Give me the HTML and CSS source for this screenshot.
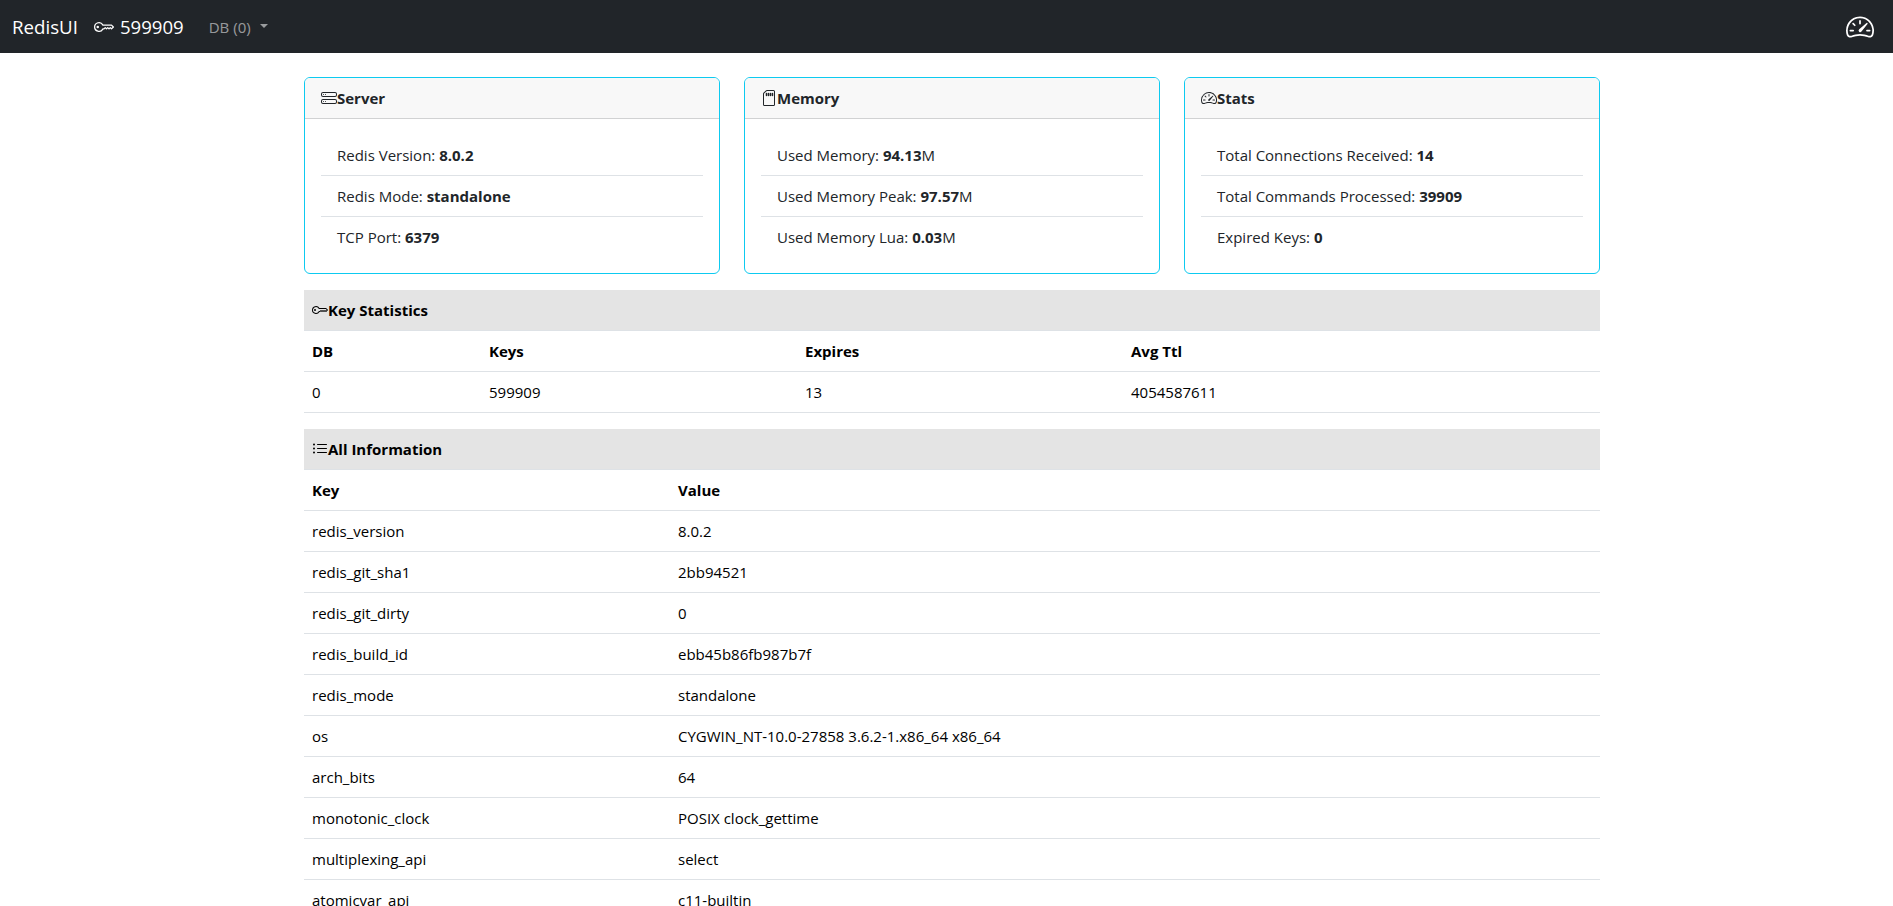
FILE: index.html
```html
<!DOCTYPE html>
<html lang="en">
<head>
<meta charset="utf-8">
<title>RedisUI</title>
<link rel="stylesheet" href="styles.css">
</head>
<body>
<svg class="sprite" xmlns="http://www.w3.org/2000/svg">
  <symbol id="i-key" viewBox="0 0 16 16"><path d="M0 8a4 4 0 0 1 7.465-2H14a.5.5 0 0 1 .354.146l1.5 1.5a.5.5 0 0 1 0 .708l-1.5 1.5a.5.5 0 0 1-.708 0L13 9.207l-.646.647a.5.5 0 0 1-.708 0L11 9.207l-.646.647a.5.5 0 0 1-.708 0L9 9.207l-.646.647A.5.5 0 0 1 8 10h-.535A4 4 0 0 1 0 8m4-3a3 3 0 1 0 2.712 4.285A.5.5 0 0 1 7.163 9h.63l.853-.854a.5.5 0 0 1 .708 0l.646.647.646-.647a.5.5 0 0 1 .708 0l.646.647.646-.647a.5.5 0 0 1 .708 0l.646.647.793-.793-1-1h-6.63a.5.5 0 0 1-.451-.285A3 3 0 0 0 4 5"/><path d="M4 8a1 1 0 1 1-2 0 1 1 0 0 1 2 0"/></symbol>
  <symbol id="i-hdd" viewBox="0 0 16 16"><path d="M14 10a1 1 0 0 1 1 1v1a1 1 0 0 1-1 1H2a1 1 0 0 1-1-1v-1a1 1 0 0 1 1-1zM2 9a2 2 0 0 0-2 2v1a2 2 0 0 0 2 2h12a2 2 0 0 0 2-2v-1a2 2 0 0 0-2-2z"/><path d="M5 11.5a.5.5 0 1 1-1 0 .5.5 0 0 1 1 0m-2 0a.5.5 0 1 1-1 0 .5.5 0 0 1 1 0M14 3a1 1 0 0 1 1 1v1a1 1 0 0 1-1 1H2a1 1 0 0 1-1-1V4a1 1 0 0 1 1-1zM2 2a2 2 0 0 0-2 2v1a2 2 0 0 0 2 2h12a2 2 0 0 0 2-2V4a2 2 0 0 0-2-2z"/><path d="M5 4.5a.5.5 0 1 1-1 0 .5.5 0 0 1 1 0m-2 0a.5.5 0 1 1-1 0 .5.5 0 0 1 1 0"/></symbol>
  <symbol id="i-sd" viewBox="0 0 16 16"><path d="M6.25 3.5a.75.75 0 0 0-1.5 0v2a.75.75 0 0 0 1.5 0zm2 0a.75.75 0 0 0-1.5 0v2a.75.75 0 0 0 1.5 0zm2 0a.75.75 0 0 0-1.5 0v2a.75.75 0 0 0 1.5 0zm2 0a.75.75 0 0 0-1.5 0v2a.75.75 0 0 0 1.5 0z"/><path fill-rule="evenodd" d="M5.914 0H12.5A1.5 1.5 0 0 1 14 1.5v13a1.5 1.5 0 0 1-1.5 1.5h-9A1.5 1.5 0 0 1 2 14.5V3.914c0-.398.158-.78.44-1.06L4.853.439A1.5 1.5 0 0 1 5.914 0M13 1.5a.5.5 0 0 0-.5-.5H5.914a.5.5 0 0 0-.353.146L3.146 3.561A.5.5 0 0 0 3 3.914V14.5a.5.5 0 0 0 .5.5h9a.5.5 0 0 0 .5-.5z"/></symbol>
  <symbol id="i-speed" viewBox="0 0 16 16"><path d="M8 4a.5.5 0 0 1 .5.5V6a.5.5 0 0 1-1 0V4.5A.5.5 0 0 1 8 4M3.732 5.732a.5.5 0 0 1 .707 0l.915.914a.5.5 0 1 1-.708.708l-.914-.915a.5.5 0 0 1 0-.707M2 10a.5.5 0 0 1 .5-.5h1.586a.5.5 0 0 1 0 1H2.5A.5.5 0 0 1 2 10m9.5 0a.5.5 0 0 1 .5-.5h1.5a.5.5 0 0 1 0 1H12a.5.5 0 0 1-.5-.5m.754-4.246a.39.39 0 0 0-.527-.02L7.547 9.31a.91.91 0 1 0 1.302 1.258l3.434-4.297a.39.39 0 0 0-.029-.518z"/><path fill-rule="evenodd" d="M0 10a8 8 0 1 1 15.547 2.661c-.442 1.253-1.845 1.602-2.932 1.25C11.309 13.488 9.475 13 8 13c-1.474 0-3.31.488-4.615.911-1.087.352-2.49.003-2.932-1.25A8 8 0 0 1 0 10m8-7a7 7 0 0 0-6.603 9.329c.203.575.923.876 1.68.63C4.397 12.533 6.358 12 8 12s3.604.532 4.923.96c.757.245 1.477-.056 1.68-.631A7 7 0 0 0 8 3"/></symbol>
  <symbol id="i-list" viewBox="0 0 16 16"><path fill-rule="evenodd" d="M5 11.5a.5.5 0 0 1 .5-.5h9a.5.5 0 0 1 0 1h-9a.5.5 0 0 1-.5-.5m0-4a.5.5 0 0 1 .5-.5h9a.5.5 0 0 1 0 1h-9a.5.5 0 0 1-.5-.5m0-4a.5.5 0 0 1 .5-.5h9a.5.5 0 0 1 0 1h-9a.5.5 0 0 1-.5-.5m-3 1a1 1 0 1 0 0-2 1 1 0 0 0 0 2m0 4a1 1 0 1 0 0-2 1 1 0 0 0 0 2m0 4a1 1 0 1 0 0-2 1 1 0 0 0 0 2"/></symbol>
</svg>

<nav class="navbar">
  <a class="brand">RedisUI</a>
  <span class="key-count"><svg class="icon icon-nav"><use href="#i-key"/></svg>599909</span>
  <a class="db-toggle">DB (0)<span class="caret"></span></a>
  <svg class="icon icon-speed"><use href="#i-speed"/></svg>
</nav>

<main class="content">
  <section class="cards">
    <article class="card">
      <header class="card-header"><svg class="icon"><use href="#i-hdd"/></svg>Server</header>
      <ul class="card-list">
        <li>Redis Version: <b>8.0.2</b></li>
        <li>Redis Mode: <b>standalone</b></li>
        <li>TCP Port: <b>6379</b></li>
      </ul>
    </article>
    <article class="card">
      <header class="card-header"><svg class="icon"><use href="#i-sd"/></svg>Memory</header>
      <ul class="card-list">
        <li>Used Memory: <b>94.13</b>M</li>
        <li>Used Memory Peak: <b>97.57</b>M</li>
        <li>Used Memory Lua: <b>0.03</b>M</li>
      </ul>
    </article>
    <article class="card">
      <header class="card-header"><svg class="icon"><use href="#i-speed"/></svg>Stats</header>
      <ul class="card-list">
        <li>Total Connections Received: <b>14</b></li>
        <li>Total Commands Processed: <b>39909</b></li>
        <li>Expired Keys: <b>0</b></li>
      </ul>
    </article>
  </section>

  <section class="panel">
    <header class="panel-header"><svg class="icon"><use href="#i-key"/></svg>Key Statistics</header>
    <table class="data keystats">
      <thead><tr><th>DB</th><th>Keys</th><th>Expires</th><th>Avg Ttl</th></tr></thead>
      <tbody><tr><td>0</td><td>599909</td><td>13</td><td>4054587611</td></tr></tbody>
    </table>
  </section>

  <section class="panel">
    <header class="panel-header"><svg class="icon"><use href="#i-list"/></svg>All Information</header>
    <table class="data allinfo">
      <thead><tr><th>Key</th><th>Value</th></tr></thead>
      <tbody>
        <tr><td>redis_version</td><td>8.0.2</td></tr>
        <tr><td>redis_git_sha1</td><td>2bb94521</td></tr>
        <tr><td>redis_git_dirty</td><td>0</td></tr>
        <tr><td>redis_build_id</td><td>ebb45b86fb987b7f</td></tr>
        <tr><td>redis_mode</td><td>standalone</td></tr>
        <tr><td>os</td><td>CYGWIN_NT-10.0-27858 3.6.2-1.x86_64 x86_64</td></tr>
        <tr><td>arch_bits</td><td>64</td></tr>
        <tr><td>monotonic_clock</td><td>POSIX clock_gettime</td></tr>
        <tr><td>multiplexing_api</td><td>select</td></tr>
        <tr><td>atomicvar_api</td><td>c11-builtin</td></tr>
      </tbody>
    </table>
  </section>
</main>
</body>
</html>
```

FILE: styles.css
```css
* { box-sizing: border-box; }
html { height: 100%; overflow: hidden; }
body {
  margin: 0;
  height: 906px;
  overflow: hidden;
  background: #fff;
  color: #212529;
  font-family: "Open Sans", "Noto Sans", sans-serif;
  font-size: 15px;
  line-height: 24px;
}
.sprite { display: none; }
.icon { width: 16px; height: 16px; fill: currentColor; flex: none; }

.navbar {
  display: flex;
  align-items: center;
  height: 53px;
  padding: 0 12px;
  background: #212529;
  color: #fff;
}
.brand { font-size: 18.7px; margin-right: 16px; }
.key-count { display: flex; align-items: center; font-size: 18.6px; }
.icon-nav { width: 20px; height: 20px; margin-right: 6px; }
.db-toggle {
  display: flex;
  align-items: center;
  margin-left: 25px;
  font-size: 15px;
  color: rgba(255, 255, 255, .55);
}
.caret {
  margin-left: 9px;
  border-top: 4.8px solid rgba(255, 255, 255, .55);
  border-left: 4.8px solid transparent;
  border-right: 4.8px solid transparent;
  margin-top: -2px;
}
.icon-speed { width: 28px; height: 28px; margin-left: auto; margin-right: 7px; }

.content {
  width: 1296px;
  margin-left: 304px;
  padding-top: 24px;
}
.cards {
  display: grid;
  grid-template-columns: repeat(3, 1fr);
  gap: 24px;
  margin-bottom: 16px;
}
.card {
  height: 197px;
  border: 1px solid #0dcaf0;
  border-radius: 6px;
  overflow: hidden;
}
.card-header {
  display: flex;
  align-items: center;
  height: 41px;
  padding: 0 16px;
  background: #f8f8f8;
  border-bottom: 1px solid #d1d2d3;
  font-weight: 700;
}
.card-list { list-style: none; margin: 0; padding: 16px; }
.card-list li {
  height: 41px;
  padding: 8px 16px;
  border-bottom: 1px solid #dee2e6;
}
.card-list li:last-child { border-bottom: 0; height: 40px; }
.card-list b { font-weight: 700; }

.panel { margin-bottom: 16px; }
.panel-header {
  display: flex;
  align-items: center;
  height: 41px;
  padding: 0 8px;
  background: #e4e4e4;
  border-bottom: 1px solid #dee2e6;
  font-weight: 700;
  color: #000;
}
.data {
  width: 100%;
  border-collapse: separate;
  border-spacing: 0;
  table-layout: fixed;
  color: #000;
}
.data th, .data td {
  height: 41px;
  padding: 8px;
  text-align: left;
  border-bottom: 1px solid #dee2e6;
  font-weight: 400;
}
.data th { font-weight: 700; }
.keystats th:nth-child(1) { width: 177px; }
.keystats th:nth-child(2) { width: 316px; }
.keystats th:nth-child(3) { width: 326px; }
.allinfo th:nth-child(1) { width: 366px; }
```
